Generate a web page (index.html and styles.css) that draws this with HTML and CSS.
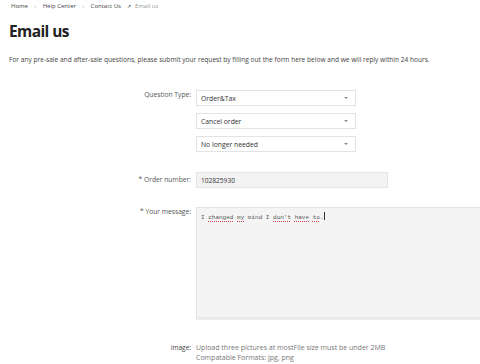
FILE: index.html
```html
<!DOCTYPE html>
<html>
<head>
<meta charset="utf-8">
<link rel="stylesheet" href="styles.css">
</head>
<body>
<div class="page">
  <nav class="crumbs">
    <span class="crumb">Home</span><span class="sep">›</span>
    <span class="crumb">Help Center</span><span class="sep">›</span>
    <span class="crumb">Contact Us</span><span class="sep dark">↗</span>
    <span class="crumb current">Email us</span>
  </nav>
  <h1 class="title">Email us</h1>
  <p class="intro">For any pre-sale and after-sale questions, please submit your request by filling out the form here below and we will reply within 24 hours.</p>
  <div class="form">
    <div class="row">
      <div class="label">Question Type:</div>
      <div class="field selects">
        <div class="select"><span>Order&amp;Tax</span><span class="caret"></span></div>
        <div class="select"><span>Cancel order</span><span class="caret"></span></div>
        <div class="select"><span>No longer needed</span><span class="caret"></span></div>
      </div>
    </div>
    <div class="row order">
      <div class="label">* Order number:</div>
      <div class="field"><div class="input">102825930</div></div>
    </div>
    <div class="row message">
      <div class="label">* Your message:</div>
      <div class="field"><div class="textarea">I <span class="sp">changed</span> <span class="sp">my</span> mind I <span class="sp">don't</span> <span class="sp">have</span> <span class="sp">to</span>.<span class="cursor"></span></div></div>
    </div>
    <div class="row image">
      <div class="label">Image:</div>
      <div class="field hint">Upload three pictures at mostFile size must be under 2MB<br>Compatable Formats: jpg, png</div>
    </div>
  </div>
</div>
</body>
</html>
```
FILE: styles.css
```css
* { box-sizing: border-box; }
html, body { margin: 0; padding: 0; background: #fff; }
body { font-family: "Open Sans", "Liberation Sans", sans-serif; color: #333; overflow: hidden; width: 480px; height: 364px; }
.page { padding: 2px 0 0 9px; }
.crumbs { font-size: 6px; line-height: 9px; color: #444; display: flex; align-items: center; padding-left: 2px; }
.crumb.current { color: #999; }
.sep { color: #999; margin: 0 6.5px; font-size: 5.5px; }
.sep.dark { color: #333; margin: 0 4px 0 6px; font-size: 5px; }
.title { font-size: 15.5px; font-weight: 700; color: #222; margin: 9px 0 0 0; line-height: 22px; letter-spacing: -0.6px; }
.intro { font-size: 6.6px; color: #444; margin: 13px 0 0 0; line-height: 10px; }
.form { margin-top: 25px; display: flex; flex-direction: column; }
.row { display: grid; grid-template-columns: 182px 1fr; column-gap: 5px; }
.label { text-align: right; font-size: 6.7px; color: #555; line-height: 10px; }
.selects { display: flex; flex-direction: column; gap: 7px; }
.select { width: 160px; height: 16px; border: 1px solid #e3e3e3; display: flex; align-items: center; justify-content: space-between; padding: 0 7px 0 4px; font-size: 6.8px; color: #333; background: #fff; }
.caret { width: 0; height: 0; border-left: 2px solid transparent; border-right: 2px solid transparent; border-top: 2px solid #888; }
.row.order { margin-top: 20px; }
.row.order .label { padding-top: 3px; }
.input { width: 192px; height: 16px; background: #f3f3f3; border: 1px solid #e6e6e6; font-size: 6.6px; color: #333; display: flex; align-items: center; padding-left: 4px; }
.row.message { margin-top: 19px; }
.row.message .label { padding-top: 0px; }
.textarea { width: 300px; height: 111px; background: #f4f4f4; border: 1px solid #e4e4e4; box-shadow: 0 2px 0 #ececec; font-family: "Liberation Mono", monospace; font-size: 6px; color: #555; padding: 4px 4px; line-height: 9px; }
.sp { text-decoration: underline dotted #d04040; text-decoration-thickness: 0.8px; text-underline-offset: 1.5px; }
.cursor { display: inline-block; width: 0.7px; height: 8px; background: #333; vertical-align: -1px; margin-left: 0.5px; }
.row.image { margin-top: 25px; }
.row.image .label { font-size: 6.5px; color: #444; }
.hint { font-size: 7px; color: #777; line-height: 10px; }
```
